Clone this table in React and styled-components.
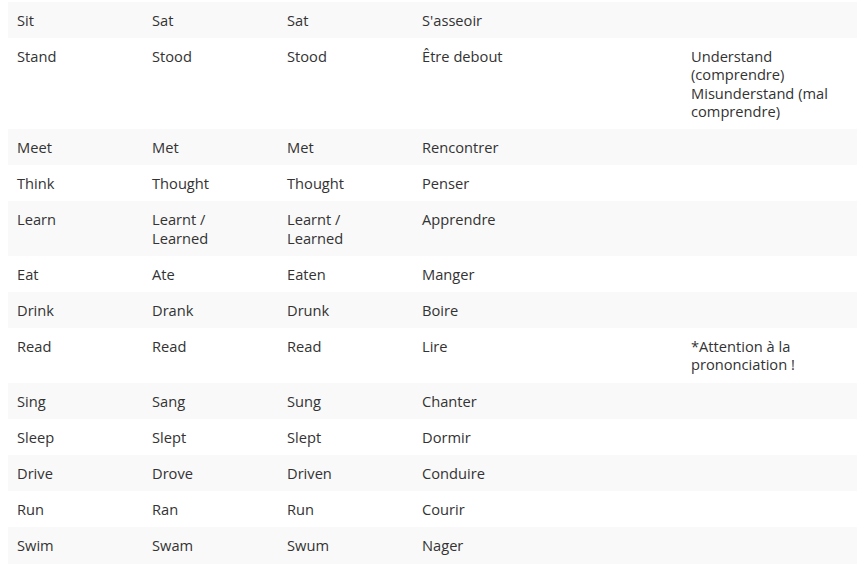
import React from 'react'
import styled, { createGlobalStyle } from 'styled-components'

const GlobalStyle = createGlobalStyle`
  body {
    margin: 0;
    padding: 2px 0 0 8px;
    background: #ffffff;
    font-family: "Open Sans", "Liberation Sans", sans-serif;
  }
`

const Table = styled.table`
  width: 849px;
  border-collapse: collapse;
  table-layout: fixed;
  font-size: 14.67px;
  line-height: 18.2px;
  color: #333333;
`

const Row = styled.tr`
  background: ${props => (props.$striped ? '#f9f9f9' : '#ffffff')};
`

const Cell = styled.td`
  padding: 9px 20px 9px 9px;
  vertical-align: top;
  text-align: left;
`

const widths = [135, 135, 135, 269, 175]

const verbs = [
  ['Sit', 'Sat', 'Sat', "S'asseoir", ''],
  ['Stand', 'Stood', 'Stood', 'Être debout', 'Understand (comprendre) Misunderstand (mal comprendre)'],
  ['Meet', 'Met', 'Met', 'Rencontrer', ''],
  ['Think', 'Thought', 'Thought', 'Penser', ''],
  ['Learn', 'Learnt / Learned', 'Learnt / Learned', 'Apprendre', ''],
  ['Eat', 'Ate', 'Eaten', 'Manger', ''],
  ['Drink', 'Drank', 'Drunk', 'Boire', ''],
  ['Read', 'Read', 'Read', 'Lire', '*Attention à la prononciation !'],
  ['Sing', 'Sang', 'Sung', 'Chanter', ''],
  ['Sleep', 'Slept', 'Slept', 'Dormir', ''],
  ['Drive', 'Drove', 'Driven', 'Conduire', ''],
  ['Run', 'Ran', 'Run', 'Courir', ''],
  ['Swim', 'Swam', 'Swum', 'Nager', ''],
]

function App() {
  return (
    <>
      <GlobalStyle />
      <Table>
        <colgroup>
          {widths.map((w, i) => <col key={i} style={{ width: w }} />)}
        </colgroup>
        <tbody>
          {verbs.map((row, i) => (
            <Row key={row[0]} $striped={i % 2 === 0}>
              {row.map((text, j) => <Cell key={j}>{text}</Cell>)}
            </Row>
          ))}
        </tbody>
      </Table>
    </>
  )
}

export default App
